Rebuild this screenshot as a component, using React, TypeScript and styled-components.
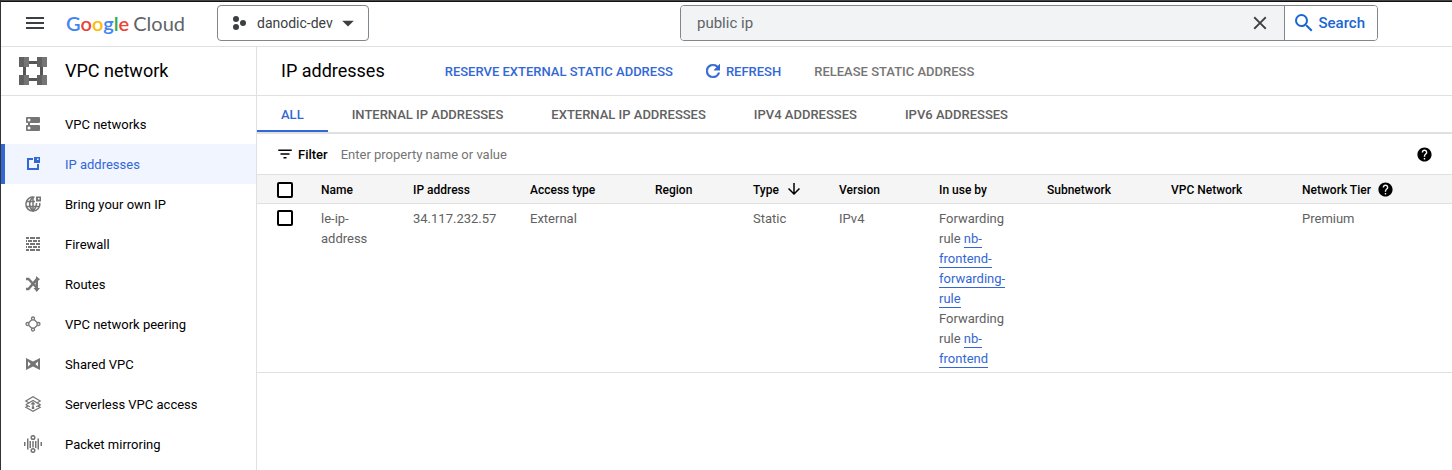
import React from 'react';
import styled, { createGlobalStyle } from 'styled-components';
import {
  MdArrowDownward,
  MdArrowDropDown,
  MdClose,
  MdFilterList,
  MdHelp,
  MdMenu,
  MdRefresh,
  MdSearch,
} from 'react-icons/md';

const blue = '#3367d6';
const line = '#e0e0e0';

const GlobalStyle = createGlobalStyle`
  *, *::before, *::after { box-sizing: border-box; }
  body {
    margin: 0;
    background: #fff;
    color: #000;
    font-family: Roboto, "Liberation Sans", sans-serif;
    font-size: 13px;
    line-height: 20px;
  }
  button, input { font: inherit; color: inherit; }
  svg { display: block; flex: none; }
`;

const Page = styled.div`
  display: flex;
  flex-direction: column;
  min-height: 100vh;
  border-left: 1px solid #333;
`;

const WindowEdge = styled.div`
  height: 2px;
  background: #444;
  border-bottom: 1px solid #111;
`;

const TopBar = styled.header`
  display: flex;
  align-items: center;
  height: 45px;
  padding: 0 74px 2px 22px;
  border-bottom: 1px solid ${line};
`;

const IconButton = styled.button`
  display: flex;
  align-items: center;
  padding: 0;
  border: 0;
  background: none;
  color: #3c4043;
  cursor: pointer;
`;

const Label = styled.span`
  padding-top: 2px;
`;

const Logo = styled.a`
  display: flex;
  gap: 4px;
  width: 117px;
  margin-left: 19px;
  font-family: Lato, sans-serif;
  font-size: 20px;
  line-height: 24px;
  color: #5f6368;
  text-decoration: none;
`;

const Brand = styled.span`
  font-weight: 600;
`;

const Letter = styled.span<{ $color: string }>`
  color: ${(p) => p.$color};
`;

const ProjectButton = styled.button`
  display: flex;
  align-items: center;
  width: 152px;
  height: 36px;
  margin-left: 34px;
  padding: 0 6px 0 14px;
  border: 1px solid #80868b;
  border-radius: 4px;
  background: #fff;
  color: #3c4043;
  font-size: 14px;
  cursor: pointer;
`;

const ProjectName = styled.span`
  flex: 1;
  margin-left: 11px;
  text-align: left;
`;

const SearchForm = styled.form`
  display: flex;
  flex: 0 1 698px;
  height: 36px;
  margin-left: auto;
  overflow: hidden;
  border: 1px solid #80868b;
  border-radius: 4px;
`;

const SearchField = styled.div`
  display: flex;
  flex: 1;
  align-items: center;
  padding: 0 13px 0 16px;
  background: #f1f3f4;
`;

const SearchInput = styled.input`
  flex: 1;
  min-width: 0;
  padding: 0;
  border: 0;
  outline: 0;
  background: none;
  color: #5f6368;
  font-size: 15px;
`;

const SearchButton = styled.button`
  display: flex;
  align-items: center;
  gap: 2px;
  padding: 0 12px 0 7px;
  border: 0;
  border-left: 1px solid #80868b;
  background: #fff;
  color: #1967d2;
  font-size: 15px;
  font-weight: 500;
  cursor: pointer;
`;

const Body = styled.div`
  display: flex;
  flex: 1;
`;

const Sidebar = styled.aside`
  flex: 0 0 256px;
  border-right: 1px solid ${line};
`;

const ProductHeader = styled.div`
  display: flex;
  align-items: center;
  gap: 18px;
  height: 49px;
  padding-left: 18px;
  border-bottom: 1px solid ${line};
`;

const Title = styled.h1`
  margin: 0;
  font-size: 18px;
  font-weight: 400;
  line-height: 24px;
`;

const Nav = styled.nav`
  padding-top: 8px;
`;

const NavItem = styled.a<{ $active?: boolean }>`
  display: flex;
  align-items: center;
  gap: 23px;
  height: 40px;
  padding-left: 19px;
  border-left: 4px solid ${(p) => (p.$active ? blue : 'transparent')};
  background: ${(p) => (p.$active ? '#f0f5ff' : 'none')};
  color: ${(p) => (p.$active ? blue : '#000')};
  text-decoration: none;

  svg { color: ${(p) => (p.$active ? blue : '#757575')}; }
`;

const Main = styled.main`
  flex: 1;
  min-width: 0;
`;

const PageHeader = styled.div`
  display: flex;
  align-items: center;
  height: 49px;
  padding-left: 24px;
  border-bottom: 1px solid ${line};
`;

const Actions = styled.div`
  display: flex;
  gap: 33px;
  margin-left: 60px;
`;

const Action = styled.button`
  display: flex;
  align-items: center;
  gap: 6px;
  padding: 0;
  border: 0;
  background: none;
  color: ${blue};
  font-weight: 500;
  cursor: pointer;

  &:disabled { color: #757575; cursor: default; }
`;

const Tabs = styled.div`
  display: flex;
  height: 38px;
  border-bottom: 2px solid ${line};
`;

const Tab = styled.button<{ $active?: boolean }>`
  padding: 4px 24px 0;
  border: 0;
  border-bottom: 2px solid ${(p) => (p.$active ? blue : 'transparent')};
  background: none;
  color: ${(p) => (p.$active ? blue : '#616161')};
  font-weight: 500;
  cursor: pointer;
`;

const FilterBar = styled.div`
  display: flex;
  align-items: center;
  height: 41px;
  padding: 0 19px;
  border-bottom: 1px solid ${line};
`;

const FilterLabel = styled.label`
  display: flex;
  align-items: center;
  gap: 4px;
  font-weight: 500;
`;

const FilterInput = styled.input`
  flex: 1;
  min-width: 0;
  margin-left: 13px;
  padding: 2px 0 0;
  border: 0;
  outline: 0;

  &::placeholder { color: #757575; opacity: 1; }
`;

const Table = styled.table`
  width: 100%;
  table-layout: fixed;
  border-collapse: separate;
  border-spacing: 0;
`;

const HeadCell = styled.th`
  height: 29px;
  padding: 0 24px 0 0;
  border-bottom: 1px solid ${line};
  background: #f5f5f5;
  font-size: 12px;
  font-weight: 500;
  text-align: left;
  white-space: nowrap;
`;

const HeadContent = styled.span`
  display: flex;
  align-items: center;
  gap: 6px;
`;

const Cell = styled.td`
  padding: 5px 24px 3px 0;
  border-bottom: 1px solid ${line};
  color: #616161;
  vertical-align: top;
`;

const Checkbox = styled.input`
  display: block;
  width: 16px;
  height: 16px;
  margin: 1px 0 0 20px;
  appearance: none;
  border: 2px solid #000;
  border-radius: 2px;
  background: #fff;

  &:checked { background: ${blue}; }
`;

const RuleLink = styled.a`
  padding-bottom: 1px;
  border-bottom: 1px solid ${blue};
  color: ${blue};
  text-decoration: none;
`;

const Icon = ({ size = 18, children }: { size?: number; children: React.ReactNode }) => (
  <svg width={size} height={size} viewBox={`0 0 ${size} ${size}`} fill="currentColor" aria-hidden="true">
    {children}
  </svg>
);

const ProductIcon = () => (
  <Icon size={28}>
    <path fill="#555" d="M9 4h10v3H9zM9 21h10v3H9zM4 9h3v10H4zM21 9h3v10h-3z" />
    {[[0, 0], [18, 0], [0, 18], [18, 18]].map(([x, y]) => (
      <g key={`${x}-${y}`}>
        <path fill="#757575" d={`M${x} ${y}h10v10h-10z`} />
        <path fill="#616161" d={`M${x} ${y}h5v10h-5z`} />
      </g>
    ))}
  </Icon>
);

const ProjectIcon = () => (
  <Icon size={14}>
    <circle cx="4" cy="3" r="3" />
    <circle cx="4" cy="11" r="3" />
    <circle cx="11" cy="7" r="3" />
  </Icon>
);

const NetworksIcon = () => (
  <Icon>
    <path
      fillRule="evenodd"
      d="M3 2h12a1 1 0 0 1 1 1v4a1 1 0 0 1-1 1H6v2h9a1 1 0 0 1 1 1v4a1 1 0 0 1-1 1H3a1 1 0 0 1-1-1v-4a1 1 0 0 1 1-1h1V8H3a1 1 0 0 1-1-1V3a1 1 0 0 1 1-1zm2 1.500a1.500 1.500 0 1 0 0 3 1.500 1.500 0 0 0 0-3zm0 8a1.500 1.500 0 1 0 0 3 1.500 1.500 0 0 0 0-3z"
    />
  </Icon>
);

const AddressesIcon = () => (
  <Icon>
    <path d="M3 3h6v2H5v8h8V9h2v6H3z" />
    <path fillRule="evenodd" d="M10 2h6v6h-6zm3 1.500v1.500h1.500v-1.500z" />
  </Icon>
);

const GlobeIcon = () => (
  <Icon>
    <g fill="none" stroke="currentColor" strokeWidth="1.500">
      <path d="M10.500 2.300A7 7 0 1 0 15.800 8" />
      <path d="M9 2C4.500 6 4.500 12 9 16c3-3 3.600-5 3.500-8M2.500 6.500H11M2.500 11.500h13M9 2v14" />
    </g>
    <path fillRule="evenodd" d="M12 1.500h5v5h-5zM14 3v1.500h1.500V3z" />
  </Icon>
);

const FirewallIcon = () => (
  <Icon>
    <path d="M2 2h3v2H2zM6 2h5v2H6zM12 2h4v2h-4zM2 5h1v2H2zM4 5h4v2H4zM9 5h4v2H9zM14 5h2v2h-2zM2 8h3v2H2zM6 8h5v2H6zM12 8h4v2h-4zM2 11h1v2H2zM4 11h4v2H4zM9 11h4v2H9zM14 11h2v2h-2zM2 14h3v2H2zM6 14h5v2H6zM12 14h4v2h-4z" />
  </Icon>
);

const RoutesIcon = () => (
  <Icon>
    <path fill="none" stroke="currentColor" strokeWidth="2.400" d="M2 4h2.500l8.500 9M2 14h2.500L12.500 4.500H14M12.800 4v9" />
    <path d="M12 1l4 3.200L12 7.500zM9.500 13H16l-3.200 4z" />
  </Icon>
);

const PeeringIcon = () => (
  <Icon>
    <g fill="none" stroke="currentColor" strokeWidth="1.300">
      <circle cx="9" cy="3.500" r="1.500" />
      <circle cx="9" cy="14.500" r="1.500" />
      <circle cx="3.500" cy="9" r="1.500" />
      <circle cx="14.500" cy="9" r="1.500" />
      <path d="M7.800 4.700l-3.200 3M10.200 4.700l3.200 3M7.800 13.300l-3.200-3M10.200 13.300l3.200-3" />
    </g>
  </Icon>
);

const SharedIcon = () => (
  <Icon>
    <path fillRule="evenodd" d="M2 3l7 3.500L16 3v12l-7-3.500L2 15zM4 6.500v5L6.700 9zM14 6.500v5L11.300 9z" />
  </Icon>
);

const ServerlessIcon = () => (
  <Icon>
    <g fill="none" stroke="currentColor" strokeWidth="1.200">
      <path d="M5.500 8.200L1.800 6 9 1.800 16.200 6l-3.700 2.200M4 8.500l-2.200 1.200L9 5.500l7.200 4.200L14 11M4 11l-2.200 1.300L9 16.200l7.200-3.900L14 11M9 8v5" />
      <path d="M1.800 9.700l4 2M16.200 9.700l-4 2" />
    </g>
    <path d="M9 6.500l2.500 3h-5zM7.800 11.500h2.400v2.500H7.800z" />
  </Icon>
);

const MirroringIcon = () => (
  <Icon>
    <path d="M0 7h1.500v4H0zM3 3.500h1.500v11H3zM5.500 6H7v7H5.500zM11 6h1.500v7H11zM13.500 3.500H15v11h-1.500zM16.500 7H18v4h-1.500z" />
    <g fill="none" stroke="currentColor" strokeWidth="1.500">
      <circle cx="9" cy="2.500" r="1.800" />
      <circle cx="9" cy="15.500" r="1.800" />
      <path d="M9 6v6.500" />
    </g>
  </Icon>
);

const navItems = [
  { label: 'VPC networks', icon: <NetworksIcon /> },
  { label: 'IP addresses', icon: <AddressesIcon />, active: true },
  { label: 'Bring your own IP', icon: <GlobeIcon /> },
  { label: 'Firewall', icon: <FirewallIcon /> },
  { label: 'Routes', icon: <RoutesIcon /> },
  { label: 'VPC network peering', icon: <PeeringIcon /> },
  { label: 'Shared VPC', icon: <SharedIcon /> },
  { label: 'Serverless VPC access', icon: <ServerlessIcon /> },
  { label: 'Packet mirroring', icon: <MirroringIcon /> },
];

const tabs = ['ALL', 'INTERNAL IP ADDRESSES', 'EXTERNAL IP ADDRESSES', 'IPV4 ADDRESSES', 'IPV6 ADDRESSES'];

const columns: { label: string; width?: number; icon?: React.ReactNode }[] = [
  { label: 'Name', width: 92 },
  { label: 'IP address', width: 117 },
  { label: 'Access type', width: 125 },
  { label: 'Region', width: 98 },
  { label: 'Type', width: 86, icon: <MdArrowDownward size={18} /> },
  { label: 'Version', width: 100 },
  { label: 'In use by', width: 108 },
  { label: 'Subnetwork', width: 124 },
  { label: 'VPC Network', width: 131 },
  { label: 'Network Tier', icon: <MdHelp size={17} /> },
];

const brandLetters = [
  ['G', '#4285f4'],
  ['o', '#ea4335'],
  ['o', '#fbbc04'],
  ['g', '#4285f4'],
  ['l', '#34a853'],
  ['e', '#ea4335'],
];

export default function App() {
  return (
    <>
      <GlobalStyle />
      <Page>
        <WindowEdge />
        <TopBar>
          <IconButton type="button" aria-label="Navigation menu">
            <MdMenu size={24} />
          </IconButton>
          <Logo href="#" aria-label="Google Cloud">
            <Brand>
              {brandLetters.map(([char, color], i) => (
                <Letter key={i} $color={color}>{char}</Letter>
              ))}
            </Brand>
            <span>Cloud</span>
          </Logo>
          <ProjectButton type="button">
            <ProjectIcon />
            <ProjectName>danodic-dev</ProjectName>
            <MdArrowDropDown size={28} />
          </ProjectButton>
          <SearchForm role="search" onSubmit={(e) => e.preventDefault()}>
            <SearchField>
              <SearchInput type="text" aria-label="Search products and resources" defaultValue="public ip" />
              <IconButton type="reset" aria-label="Clear search">
                <MdClose size={22} />
              </IconButton>
            </SearchField>
            <SearchButton type="submit">
              <MdSearch size={24} />
              Search
            </SearchButton>
          </SearchForm>
        </TopBar>
        <Body>
          <Sidebar>
            <ProductHeader>
              <ProductIcon />
              <Title as="h2">VPC network</Title>
            </ProductHeader>
            <Nav>
              {navItems.map((item) => (
                <NavItem key={item.label} href="#" $active={item.active}>
                  {item.icon}
                  <Label>{item.label}</Label>
                </NavItem>
              ))}
            </Nav>
          </Sidebar>
          <Main>
            <PageHeader>
              <Title>IP addresses</Title>
              <Actions>
                <Action type="button">
                  <Label>RESERVE EXTERNAL STATIC ADDRESS</Label>
                </Action>
                <Action type="button">
                  <MdRefresh size={14} viewBox="4 4 16 16" strokeWidth={0.5} />
                  <Label>REFRESH</Label>
                </Action>
                <Action type="button" disabled>
                  <Label>RELEASE STATIC ADDRESS</Label>
                </Action>
              </Actions>
            </PageHeader>
            <Tabs role="tablist">
              {tabs.map((tab, i) => (
                <Tab key={tab} type="button" role="tab" aria-selected={i === 0} $active={i === 0}>
                  {tab}
                </Tab>
              ))}
            </Tabs>
            <FilterBar>
              <FilterLabel htmlFor="filter">
                <MdFilterList size={18} />
                <Label>Filter</Label>
              </FilterLabel>
              <FilterInput id="filter" type="text" placeholder="Enter property name or value" />
              <IconButton type="button" aria-label="Help">
                <MdHelp size={17} color="#000" />
              </IconButton>
            </FilterBar>
            <Table>
              <colgroup>
                <col width={64} />
                {columns.map((c) => (
                  <col key={c.label} width={c.width} />
                ))}
              </colgroup>
              <thead>
                <tr>
                  <HeadCell scope="col">
                    <Checkbox type="checkbox" aria-label="Select all rows" />
                  </HeadCell>
                  {columns.map((c) => (
                    <HeadCell key={c.label} scope="col">
                      <HeadContent>
                        <Label>{c.label}</Label>
                        {c.icon}
                      </HeadContent>
                    </HeadCell>
                  ))}
                </tr>
              </thead>
              <tbody>
                <tr>
                  <Cell>
                    <Checkbox type="checkbox" aria-label="Select le-ip-address" />
                  </Cell>
                  <Cell>le-ip-address</Cell>
                  <Cell>34.117.232.57</Cell>
                  <Cell>External</Cell>
                  <Cell />
                  <Cell>Static</Cell>
                  <Cell>IPv4</Cell>
                  <Cell>
                    <div>Forwarding rule <RuleLink href="#">nb-frontend-forwarding-rule</RuleLink></div>
                    <div>Forwarding rule <RuleLink href="#">nb-frontend</RuleLink></div>
                  </Cell>
                  <Cell />
                  <Cell />
                  <Cell>Premium</Cell>
                </tr>
              </tbody>
            </Table>
          </Main>
        </Body>
      </Page>
    </>
  );
}
